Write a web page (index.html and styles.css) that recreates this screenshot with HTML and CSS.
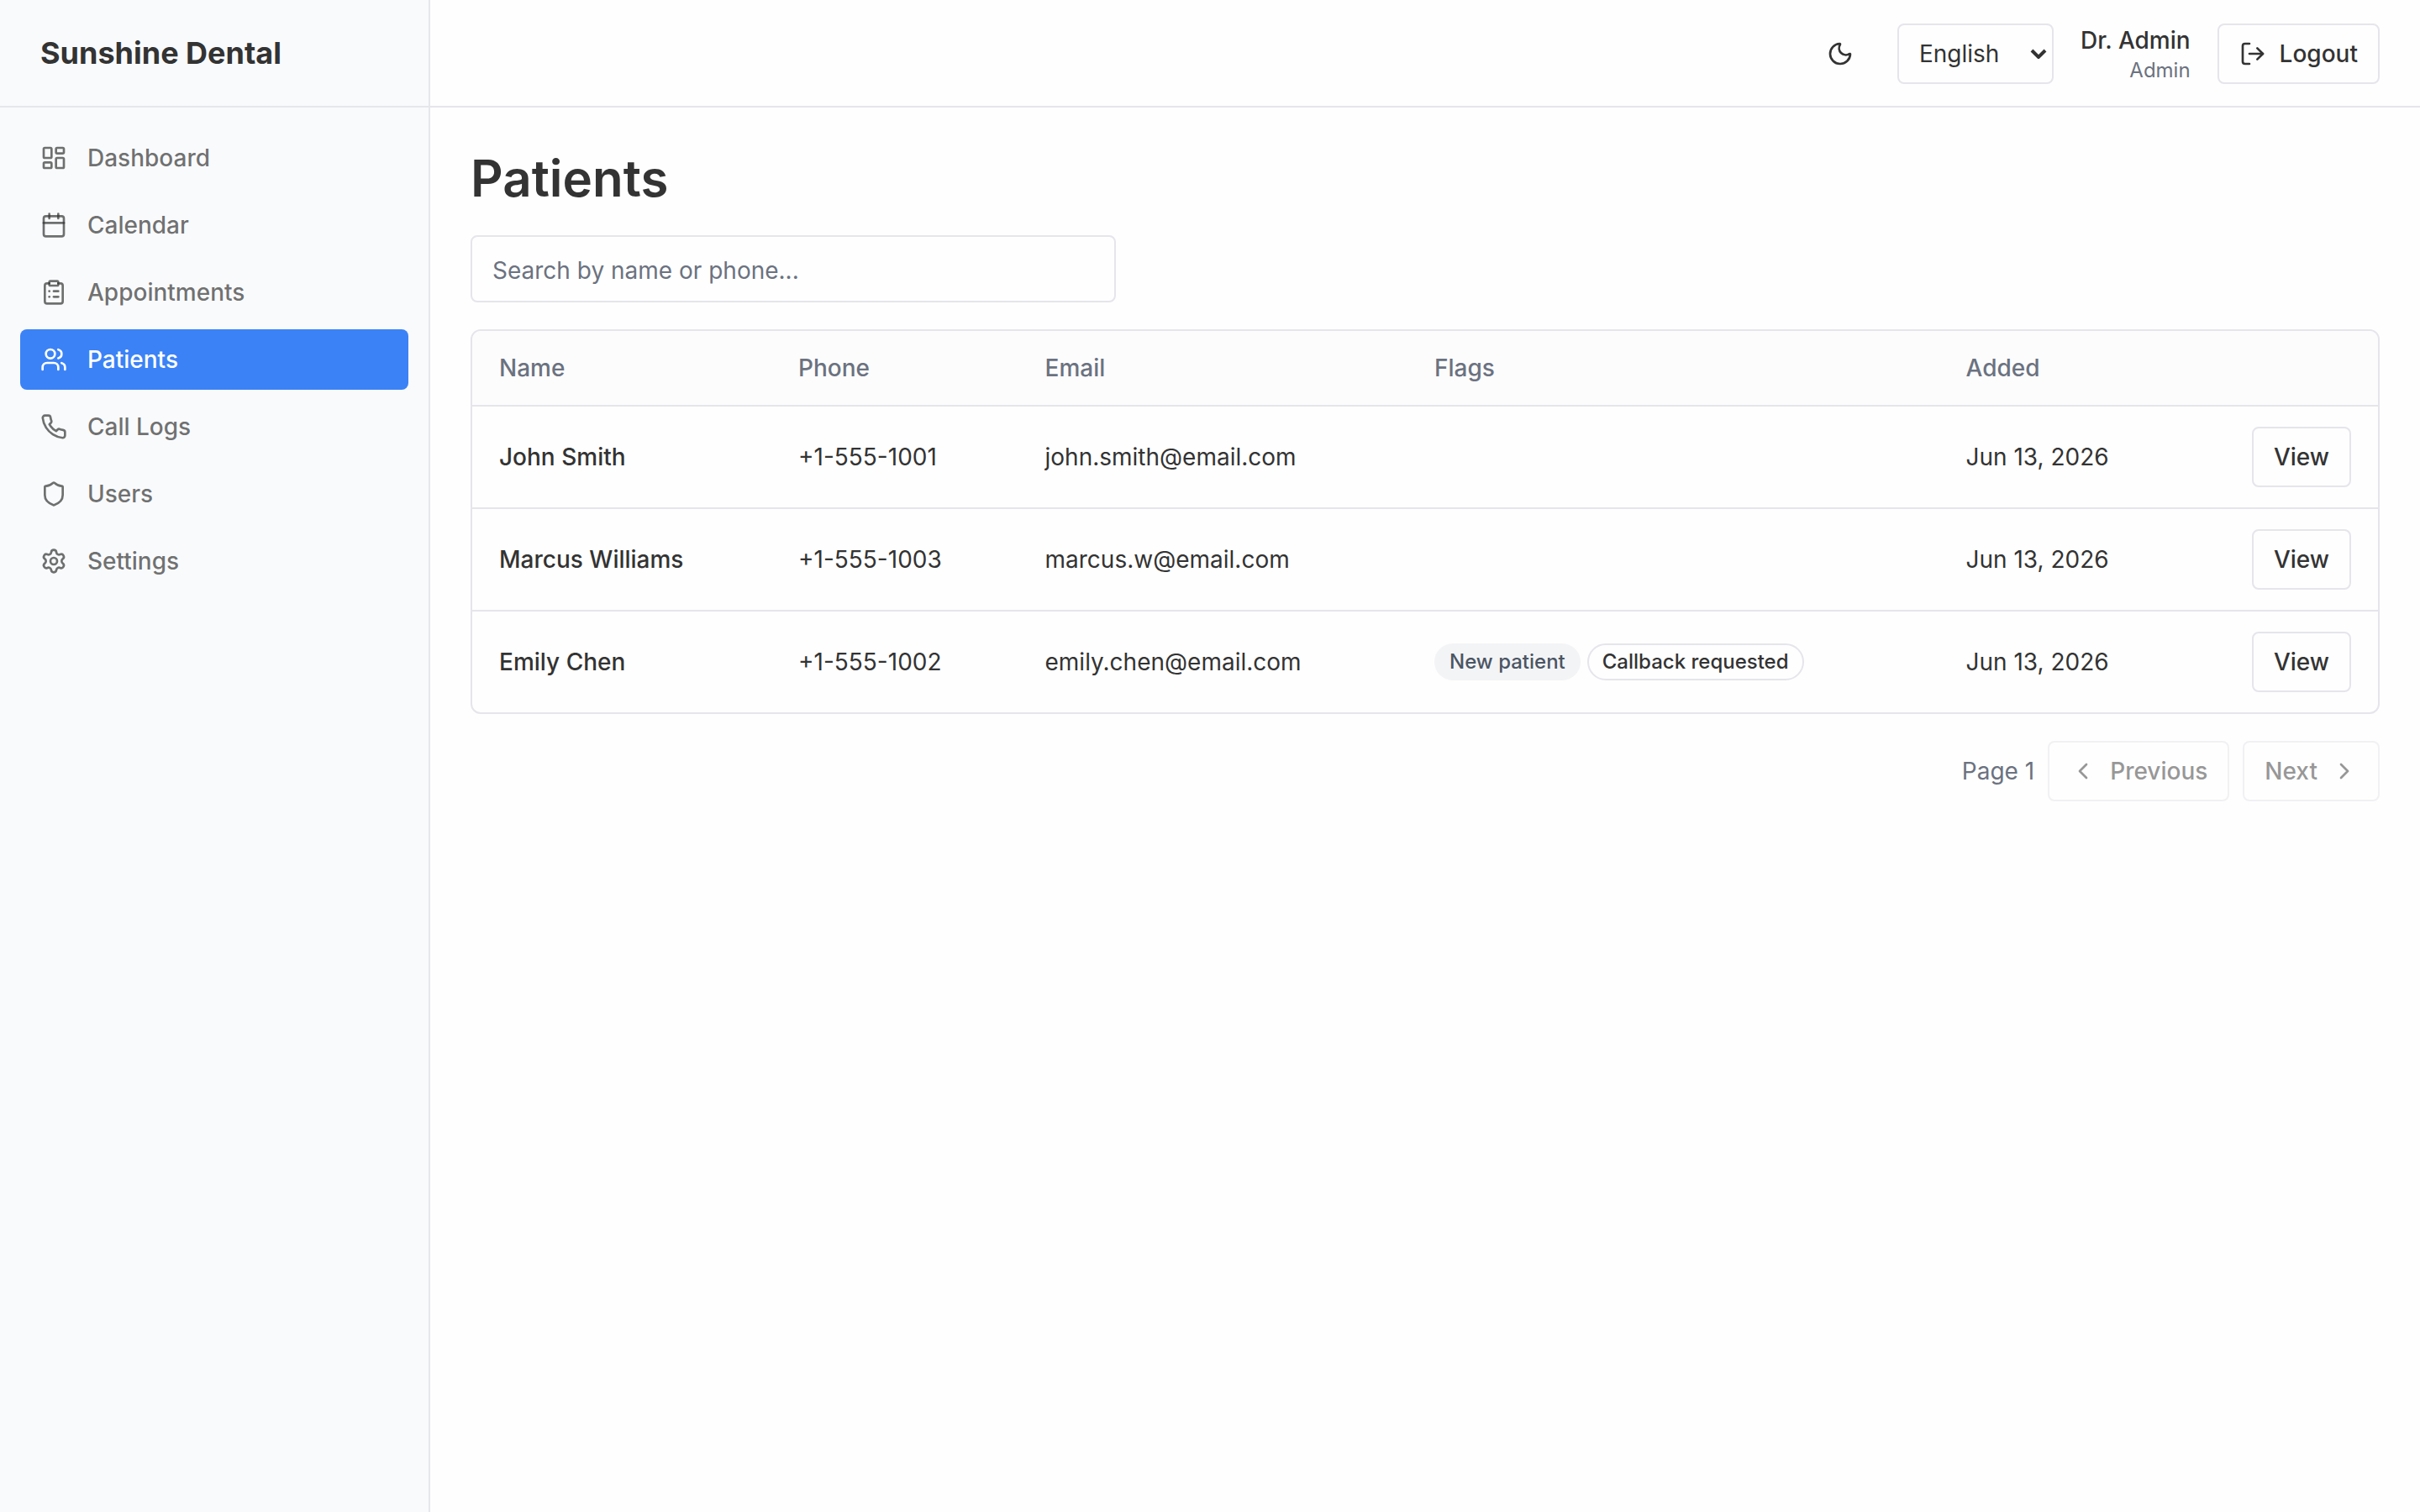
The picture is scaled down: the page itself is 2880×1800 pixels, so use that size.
FILE: index.html
```html
<!DOCTYPE html>
<html lang="en">
<head>
    <meta charset="UTF-8">
    <meta name="viewport" content="width=device-width, initial-scale=1.0">
    <title>Patients - Sunshine Dental</title>
    <link rel="stylesheet" href="styles.css">
</head>
<body>
    <div class="layout">
        <aside class="sidebar">
            <div class="brand">Sunshine Dental</div>
            <nav class="nav">
                <a class="nav-item" href="#">
                    <svg class="icon" viewBox="0 0 24 24"><rect width="7" height="9" x="3" y="3" rx="1"/><rect width="7" height="5" x="14" y="3" rx="1"/><rect width="7" height="9" x="14" y="12" rx="1"/><rect width="7" height="5" x="3" y="16" rx="1"/></svg>
                    <span>Dashboard</span>
                </a>
                <a class="nav-item" href="#">
                    <svg class="icon" viewBox="0 0 24 24"><path d="M8 2v4"/><path d="M16 2v4"/><rect width="18" height="18" x="3" y="4" rx="2"/><path d="M3 10h18"/></svg>
                    <span>Calendar</span>
                </a>
                <a class="nav-item" href="#">
                    <svg class="icon" viewBox="0 0 24 24"><rect width="8" height="4" x="8" y="2" rx="1" ry="1"/><path d="M16 4h2a2 2 0 0 1 2 2v14a2 2 0 0 1-2 2H6a2 2 0 0 1-2-2V6a2 2 0 0 1 2-2h2"/><path d="M12 11h4"/><path d="M12 16h4"/><path d="M8 11h.01"/><path d="M8 16h.01"/></svg>
                    <span>Appointments</span>
                </a>
                <a class="nav-item active" href="#">
                    <svg class="icon" viewBox="0 0 24 24"><path d="M16 21v-2a4 4 0 0 0-4-4H6a4 4 0 0 0-4 4v2"/><path d="M16 3.128a4 4 0 0 1 0 7.744"/><path d="M22 21v-2a4 4 0 0 0-3-3.87"/><circle cx="9" cy="7" r="4"/></svg>
                    <span>Patients</span>
                </a>
                <a class="nav-item" href="#">
                    <svg class="icon" viewBox="0 0 24 24"><path d="M22 16.92v3a2 2 0 0 1-2.18 2 19.79 19.79 0 0 1-8.63-3.07 19.5 19.5 0 0 1-6-6 19.79 19.79 0 0 1-3.07-8.67A2 2 0 0 1 4.11 2h3a2 2 0 0 1 2 1.72 12.84 12.84 0 0 0 .7 2.81 2 2 0 0 1-.45 2.11L8.09 9.91a16 16 0 0 0 6 6l1.27-1.27a2 2 0 0 1 2.11-.45 12.84 12.84 0 0 0 2.81.7A2 2 0 0 1 22 16.92z"/></svg>
                    <span>Call Logs</span>
                </a>
                <a class="nav-item" href="#">
                    <svg class="icon" viewBox="0 0 24 24"><path d="M20 13c0 5-3.5 7.5-7.66 8.95a1 1 0 0 1-.67-.01C7.5 20.5 4 18 4 13V6a1 1 0 0 1 1-1c2 0 4.5-1.2 6.24-2.72a1.17 1.17 0 0 1 1.52 0C14.51 3.81 17 5 19 5a1 1 0 0 1 1 1z"/></svg>
                    <span>Users</span>
                </a>
                <a class="nav-item" href="#">
                    <svg class="icon" viewBox="0 0 24 24"><path d="M9.671 4.136a2.34 2.34 0 0 1 4.659 0 2.34 2.34 0 0 0 3.319 1.915 2.34 2.34 0 0 1 2.33 4.033 2.34 2.34 0 0 0 0 3.831 2.34 2.34 0 0 1-2.33 4.033 2.34 2.34 0 0 0-3.319 1.915 2.34 2.34 0 0 1-4.659 0 2.34 2.34 0 0 0-3.32-1.915 2.34 2.34 0 0 1-2.33-4.033 2.34 2.34 0 0 0 0-3.831A2.34 2.34 0 0 1 6.35 6.051a2.34 2.34 0 0 0 3.319-1.915"/><circle cx="12" cy="12" r="3"/></svg>
                    <span>Settings</span>
                </a>
            </nav>
        </aside>

        <div class="content">
            <header class="topbar">
                <button class="icon-btn" type="button" aria-label="Toggle theme">
                    <svg class="icon" viewBox="0 0 24 24"><path d="M20.985 12.486a9 9 0 1 1-9.473-9.472c.405-.022.617.46.402.803a6 6 0 0 0 8.268 8.268c.344-.215.825-.004.803.401"/></svg>
                </button>
                <div class="select-wrap">
                    <select class="lang-select" aria-label="Language">
                        <option>English</option>
                    </select>
                    <svg class="select-arrow" viewBox="0 0 20 12"><path d="M2 2l8 8 8-8"/></svg>
                </div>
                <div class="user">
                    <div class="user-name">Dr. Admin</div>
                    <div class="user-role">Admin</div>
                </div>
                <button class="btn" type="button">
                    <svg class="icon" viewBox="0 0 24 24"><path d="m16 17 5-5-5-5"/><path d="M21 12H9"/><path d="M9 21H5a2 2 0 0 1-2-2V5a2 2 0 0 1 2-2h4"/></svg>
                    Logout
                </button>
            </header>

            <main class="main">
                <h1 class="page-title">Patients</h1>
                <input class="search" type="text" placeholder="Search by name or phone...">

                <div class="table-wrap">
                    <table class="table">
                        <colgroup>
                            <col class="col-name">
                            <col class="col-phone">
                            <col class="col-email">
                            <col class="col-flags">
                            <col class="col-added">
                            <col>
                        </colgroup>
                        <thead>
                            <tr>
                                <th>Name</th>
                                <th>Phone</th>
                                <th>Email</th>
                                <th>Flags</th>
                                <th>Added</th>
                                <th></th>
                            </tr>
                        </thead>
                        <tbody>
                            <tr>
                                <td class="name">John Smith</td>
                                <td>+1-555-1001</td>
                                <td>john.smith@email.com</td>
                                <td></td>
                                <td>Jun 13, 2026</td>
                                <td><div class="actions"><button class="btn" type="button">View</button></div></td>
                            </tr>
                            <tr>
                                <td class="name">Marcus Williams</td>
                                <td>+1-555-1003</td>
                                <td>marcus.w@email.com</td>
                                <td></td>
                                <td>Jun 13, 2026</td>
                                <td><div class="actions"><button class="btn" type="button">View</button></div></td>
                            </tr>
                            <tr>
                                <td class="name">Emily Chen</td>
                                <td>+1-555-1002</td>
                                <td>emily.chen@email.com</td>
                                <td>
                                    <div class="flags">
                                        <span class="badge badge-secondary">New patient</span>
                                        <span class="badge">Callback requested</span>
                                    </div>
                                </td>
                                <td>Jun 13, 2026</td>
                                <td><div class="actions"><button class="btn" type="button">View</button></div></td>
                            </tr>
                        </tbody>
                    </table>
                </div>

                <div class="pagination">
                    <span class="page-info">Page 1</span>
                    <button class="btn" type="button" disabled>
                        <svg class="icon" viewBox="0 0 24 24"><path d="m15 18-6-6 6-6"/></svg>
                        Previous
                    </button>
                    <button class="btn" type="button" disabled>
                        Next
                        <svg class="icon" viewBox="0 0 24 24"><path d="m9 18 6-6-6-6"/></svg>
                    </button>
                </div>
            </main>
        </div>
    </div>
</body>
</html>
```
FILE: styles.css
```css
* {
    margin: 0;
    padding: 0;
    box-sizing: border-box;
}

body {
    font-family: Inter, sans-serif;
    font-size: 28px;
    line-height: 40px;
    color: #333;
    background-color: #fefefe;
}

button, input, select {
    font: inherit;
    color: inherit;
}

.layout {
    display: flex;
    min-height: 100vh;
}

.icon {
    width: 32px;
    height: 32px;
    flex-shrink: 0;
    fill: none;
    stroke: currentColor;
    stroke-width: 2;
    stroke-linecap: round;
    stroke-linejoin: round;
}

/* Sidebar */
.sidebar {
    width: 512px;
    flex-shrink: 0;
    background-color: #f9fafc;
    border-right: 2px solid #e5e7eb;
}

.brand {
    display: flex;
    align-items: center;
    height: 128px;
    padding: 0 48px;
    border-bottom: 2px solid #e5e7eb;
    font-size: 36px;
    font-weight: 700;
}

.nav {
    display: flex;
    flex-direction: column;
    gap: 8px;
    padding: 24px;
}

.nav-item {
    display: flex;
    align-items: center;
    gap: 24px;
    padding: 16px 24px;
    border-radius: 8px;
    font-weight: 500;
    color: rgba(51, 51, 51, 0.7);
    text-decoration: none;
}

.nav-item.active {
    background-color: #3b82f6;
    color: #fff;
}

/* Header */
.content {
    flex: 1;
}

.topbar {
    display: flex;
    align-items: center;
    justify-content: flex-end;
    gap: 32px;
    height: 128px;
    padding: 2px 48px 0;
    border-bottom: 2px solid #e5e5eb;
}

.icon-btn {
    display: flex;
    align-items: center;
    justify-content: center;
    width: 72px;
    height: 72px;
    border: none;
    background: none;
}

.select-wrap {
    position: relative;
}

.lang-select {
    display: block;
    width: 186px;
    height: 72px;
    padding: 0 24px;
    border: 2px solid #e5e5eb;
    border-radius: 8px;
    background-color: transparent;
    appearance: none;
}

.select-arrow {
    position: absolute;
    right: 8px;
    top: 30px;
    width: 20px;
    height: 12px;
    fill: none;
    stroke: #333;
    stroke-width: 4;
}

.user {
    text-align: right;
}

.user-name {
    font-weight: 500;
    line-height: 40px;
}

.user-role {
    font-size: 24px;
    line-height: 32px;
    color: #6b7280;
}

.btn {
    display: inline-flex;
    align-items: center;
    justify-content: center;
    gap: 16px;
    height: 72px;
    padding: 0 24px;
    border: 2px solid #e5e5eb;
    border-radius: 8px;
    background-color: transparent;
    font-weight: 500;
}

.btn:disabled {
    opacity: 0.5;
}

/* Patients page */
.main {
    display: flex;
    flex-direction: column;
    gap: 32px;
    padding: 48px;
}

.page-title {
    font-size: 60px;
    font-weight: 600;
    line-height: 72px;
}

.search {
    width: 768px;
    height: 80px;
    padding: 4px 24px 0;
    border: 2px solid #e5e5eb;
    border-radius: 8px;
    background-color: transparent;
}

.search::placeholder {
    color: #6b7280;
}

.table-wrap {
    border: 2px solid #e5e5eb;
    border-radius: 12px;
    overflow: hidden;
}

.table {
    width: 100%;
    table-layout: fixed;
    border-collapse: separate;
    border-spacing: 0;
}

.col-name { width: 356px; }
.col-phone { width: 293.5px; }
.col-email { width: 463.5px; }
.col-flags { width: 632.5px; }
.col-added { width: 280px; }

.table th {
    height: 90px;
    padding: 0 32px;
    border-bottom: 2px solid #e5e5eb;
    background-color: #fcfcfd;
    font-weight: 500;
    color: #6b7280;
    text-align: left;
}

.table td {
    padding: 24px 32px;
    border-bottom: 2px solid #e5e5eb;
    white-space: nowrap;
}

.table tbody tr:last-child td {
    border-bottom: none;
}

.table .name {
    font-weight: 500;
}

.actions {
    display: flex;
    justify-content: flex-end;
}

.flags {
    display: flex;
    gap: 8px;
}

.badge {
    padding: 4px 16px;
    border: 2px solid #e5e5eb;
    border-radius: 22px;
    font-size: 24px;
    font-weight: 500;
    line-height: 32px;
}

.badge-secondary {
    border-color: transparent;
    background-color: #f3f4f6;
    color: #4b5563;
}

.pagination {
    display: flex;
    align-items: center;
    justify-content: flex-end;
    gap: 16px;
}

.page-info {
    color: #6b7280;
}
```
